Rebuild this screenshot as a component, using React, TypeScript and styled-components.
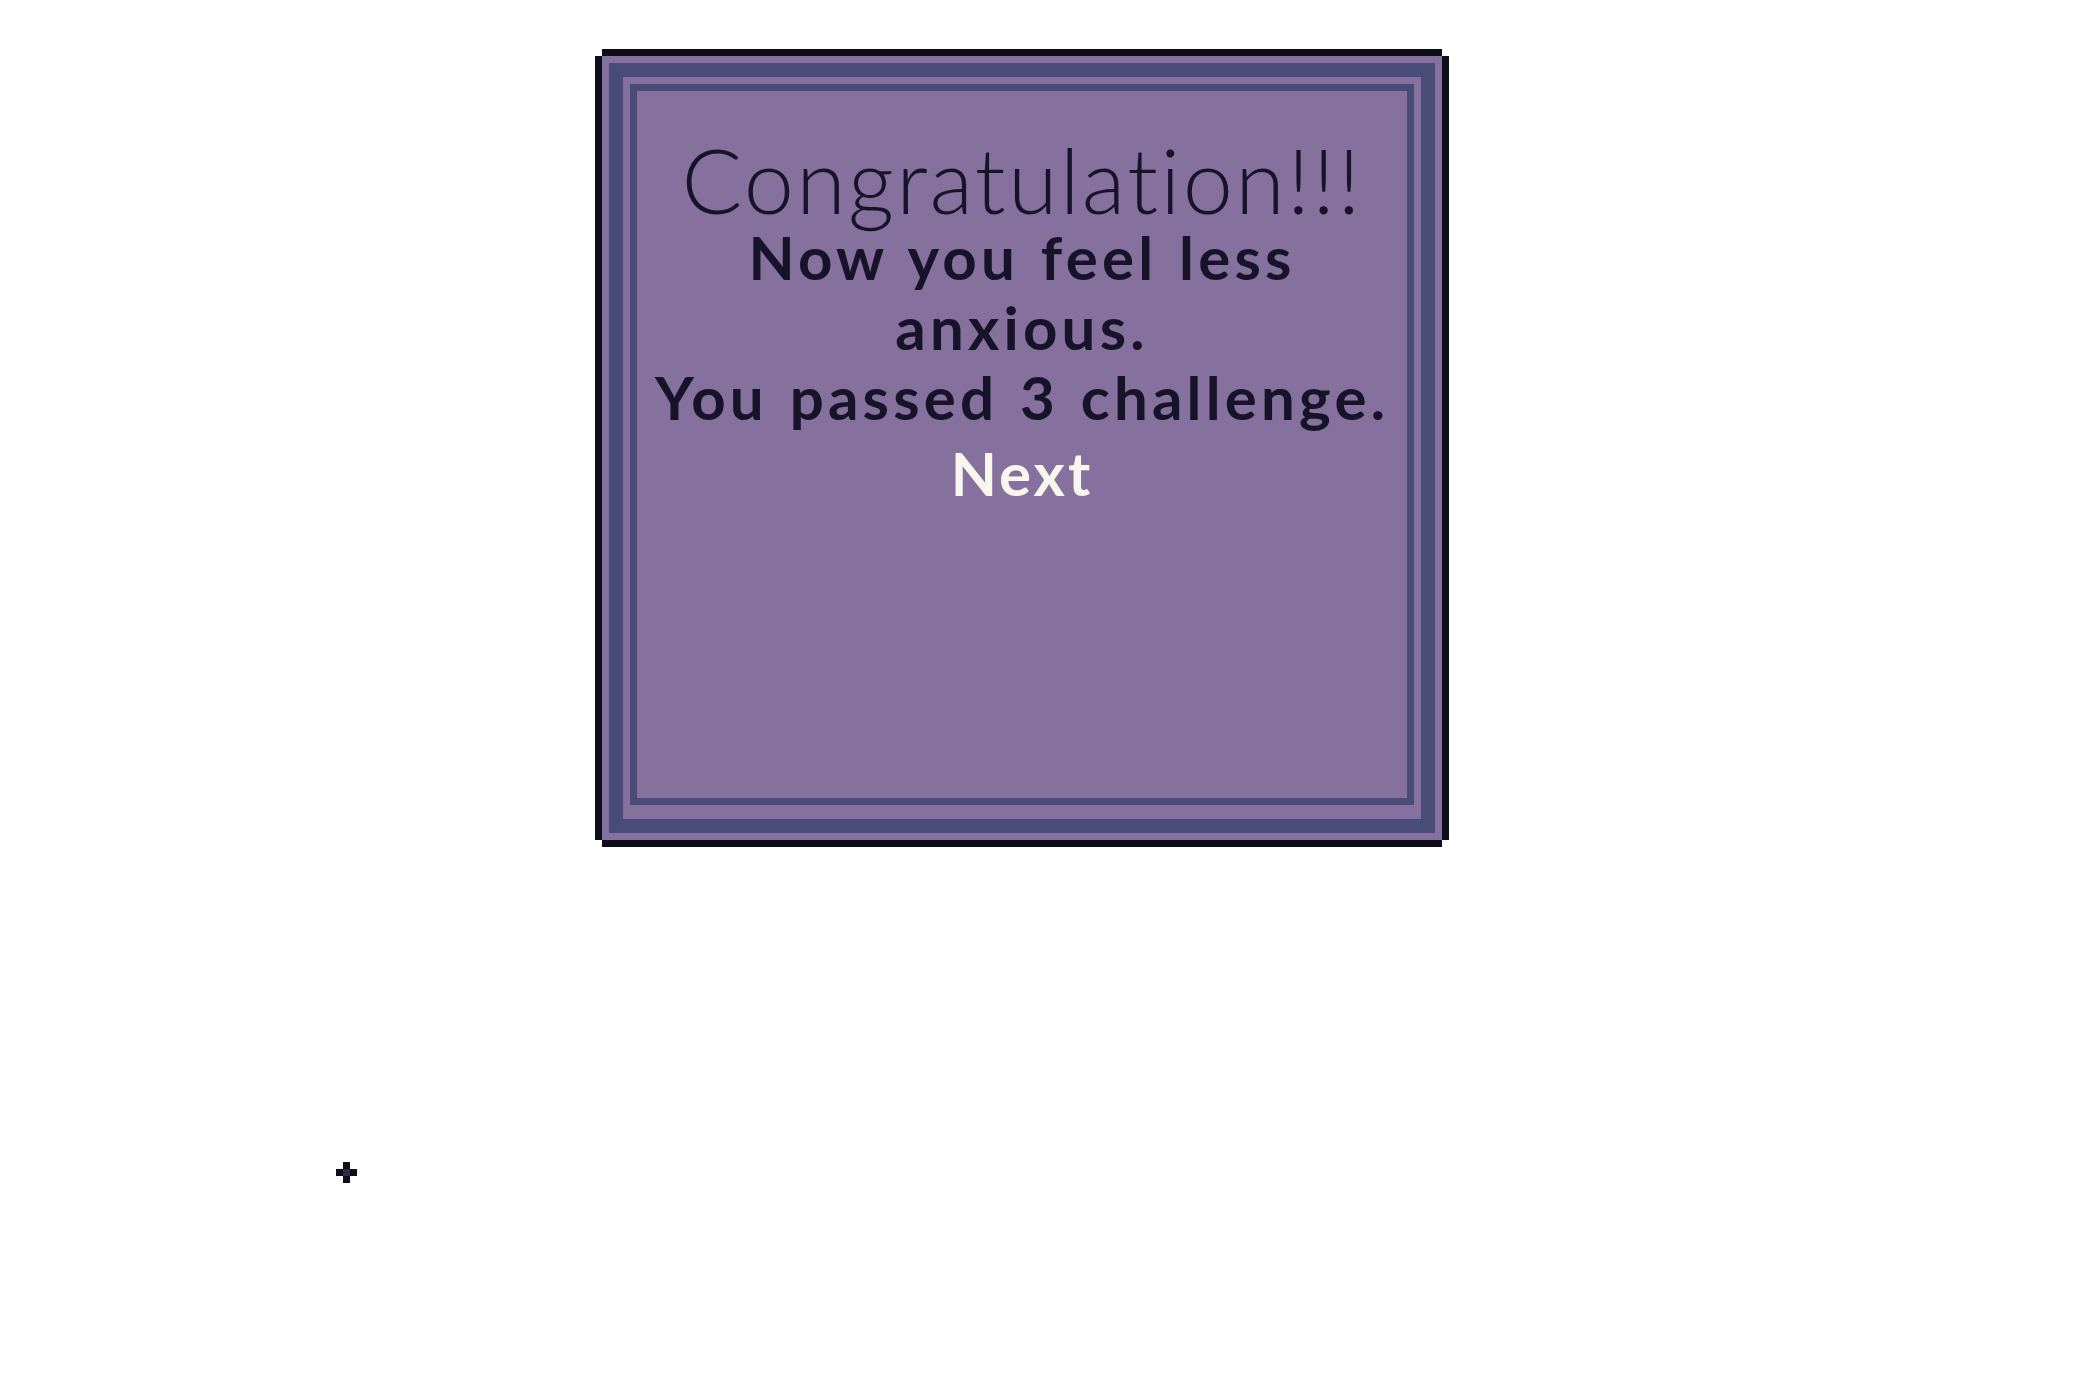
import React from "react";
import styled, { createGlobalStyle } from "styled-components";

const Global = createGlobalStyle`
  html, body { margin: 0; padding: 0; background: #ffffff; }
  body { font-family: "Lato", "Liberation Sans", sans-serif; }
`;

const Page = styled.div`
  position: relative;
  width: 2100px;
  height: 1400px;
  padding: 56px 0 0 602px;
  box-sizing: border-box;
`;

const Frame = styled.div`
  width: 840px;
  height: 784px;
  box-sizing: border-box;
  background: #85709e;
  padding: 7px;
  box-shadow: 0 -7px 0 #0e0d1a, 0 7px 0 #0e0d1a, -7px 0 0 #0e0d1a, 7px 0 0 #0e0d1a;
`;

const OuterBand = styled.div`
  height: 100%;
  box-sizing: border-box;
  border: 14px solid #4a4c78;
  padding: 7px 7px 14px 7px;
`;

const Inner = styled.div`
  height: 100%;
  box-sizing: border-box;
  border: 7px solid #4a4c78;
  padding-top: 48px;
  display: flex;
  flex-direction: column;
  align-items: center;
  text-align: center;
  color: #17142a;
`;

const Title = styled.h1`
  margin: 0 0 3px 0;
  font-size: 90px;
  line-height: 80px;
  font-weight: 300;
  letter-spacing: 2.3px;
  white-space: nowrap;
`;

const Line = styled.p`
  margin: 0;
  font-size: 60px;
  line-height: 70px;
  font-weight: 700;
  letter-spacing: 4.2px;
  word-spacing: 3px;
  white-space: nowrap;
`;

const NextButton = styled.button`
  margin-top: 6px;
  padding: 0;
  border: none;
  background: transparent;
  color: #faf6ee;
  font-family: inherit;
  font-size: 60px;
  line-height: 70px;
  font-weight: 700;
  letter-spacing: 3px;
  cursor: pointer;
`;

const Cursor = styled.svg`
  position: absolute;
  left: 336px;
  top: 1162px;
`;

export default function App() {
  return (
    <>
      <Global />
      <Page>
        <Frame>
          <OuterBand>
            <Inner>
              <Title>Congratulation!!!</Title>
              <Line>
                Now you feel less
                <br />
                anxious.
              </Line>
              <Line>You passed 3 challenge.</Line>
              <NextButton>Next</NextButton>
            </Inner>
          </OuterBand>
        </Frame>
        <Cursor width="21" height="21" viewBox="0 0 21 21">
          <rect x="7" y="0" width="7" height="21" fill="#0e0d1a" />
          <rect x="0" y="7" width="21" height="7" fill="#0e0d1a" />
          <rect x="7" y="7" width="7" height="7" fill="#2e2a4a" />
        </Cursor>
      </Page>
    </>
  );
}
